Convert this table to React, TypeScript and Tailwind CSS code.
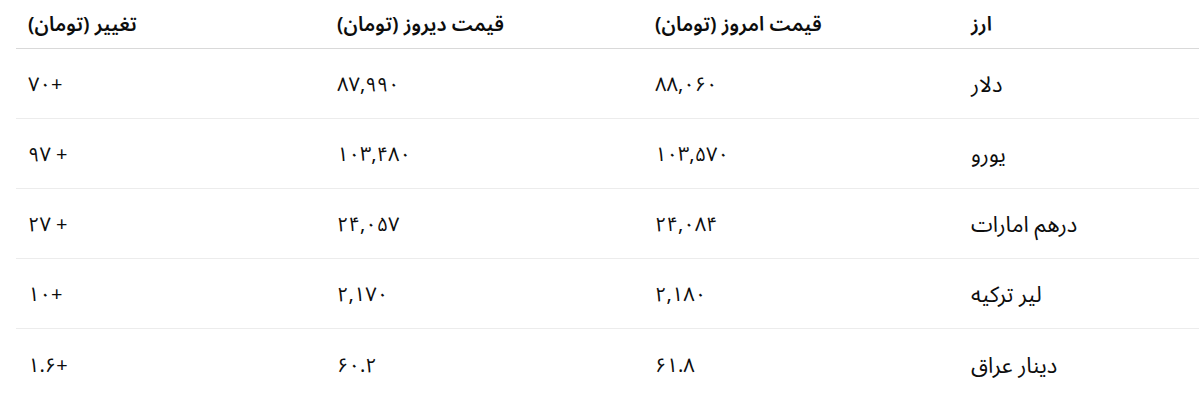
import React from "react";

const rows = [
  ["دلار", "۸۸,۰۶۰", "۸۷,۹۹۰", "+۷۰"],
  ["یورو", "۱۰۳,۵۷۰", "۱۰۳,۴۸۰", "+ ۹۷"],
  ["درهم امارات", "۲۴,۰۸۴", "۲۴,۰۵۷", "+ ۲۷"],
  ["لیر ترکیه", "۲,۱۸۰", "۲,۱۷۰", "+۱۰"],
  ["دینار عراق", "۶۱.۸", "۶۰.۲", "+۱.۶"],
];

const headers = ["ارز", "قیمت امروز (تومان)", "قیمت دیروز (تومان)", "تغییر (تومان)"];

export default function App() {
  return (
    <div className="bg-white w-[1199px] h-[410px] overflow-hidden pl-4 text-[#0d0d0d] font-['Noto_Sans_Arabic','DejaVu_Sans',sans-serif]">
      <div className="grid grid-cols-[309px_318px_316px_1fr] text-[20px]">
        {[...headers].reverse().map((h, i) => (
          <div key={"h" + i} dir="rtl" className="h-[49px] border-b border-[#d9d9d9] pl-[12px] pt-[2px] flex items-center justify-end font-semibold">
            <span>{h}</span>
          </div>
        ))}
        {rows.map((r, ri) =>
          [...r].reverse().map((c, ci) => (
            <div
              key={ri + "-" + ci}
              dir="rtl"
              className={
                "h-[70px] pl-[12px] flex items-center justify-end " +
                (ci === 3 ? "text-[22px] pt-[4px] " : "pt-[3px] ") +
                (ri < rows.length - 1 ? "border-b border-[#ececec]" : "")
              }
            >
              <span>{c}</span>
            </div>
          ))
        )}
      </div>
    </div>
  );
}
